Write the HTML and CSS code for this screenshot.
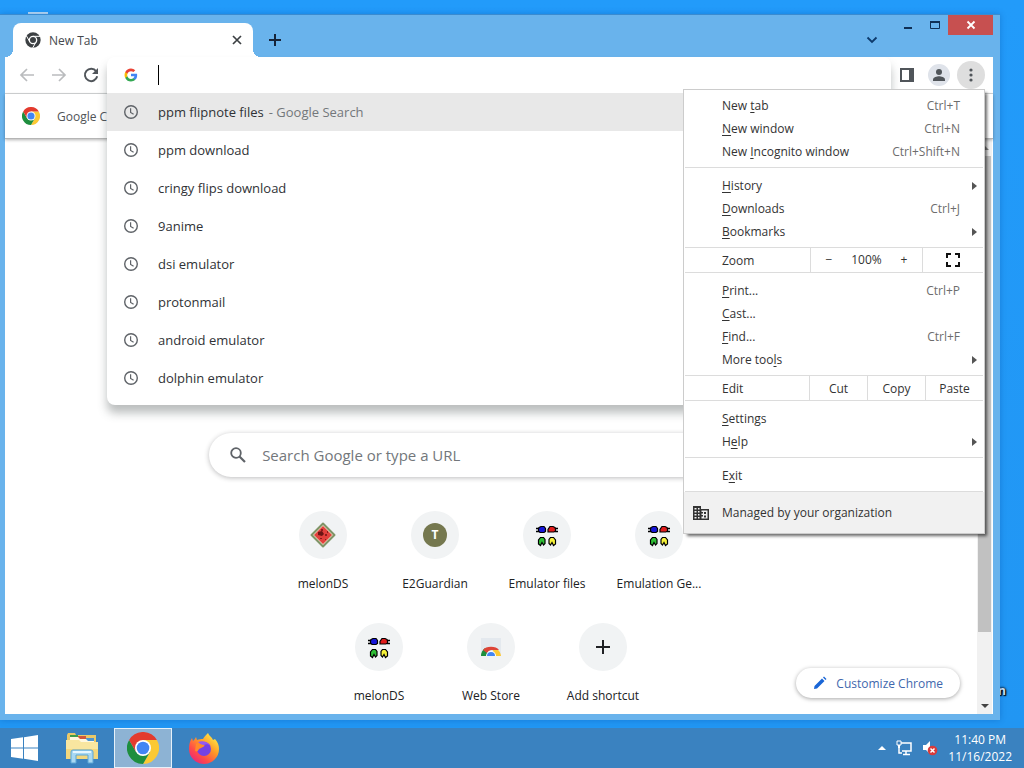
FILE: index.html
```
<!DOCTYPE html>
<html lang="en">
  <head>
    <title>New Tab</title>
    <meta charset="UTF-8">
    <link rel="stylesheet" href="styles.css">
  </head>

  <body>
	<!-- shared icons -->
	<svg class="defs" aria-hidden="true">
		<symbol id="clock" viewBox="0 0 16 16">
			<circle cx="8" cy="8" r="6.3" fill="none" stroke="#5f6368" stroke-width="1.4"/>
			<path d="M7.6 4.2v4.2l3 1.8" fill="none" stroke="#5f6368" stroke-width="1.2"/>
		</symbol>
		<symbol id="chrome" viewBox="0 0 48 48">
			<path d="M24 12H44.8A24 24 0 0 1 24 48L34.4 30z" fill="#fcc934"/>
			<path d="M34.4 30L24 48A24 24 0 0 1 3.2 12L13.6 30z" fill="#1e8e3e"/>
			<path d="M13.6 30L3.2 12A24 24 0 0 1 44.8 12H24z" fill="#e33b2e"/>
			<circle cx="24" cy="24" r="12" fill="#fff"/>
			<circle cx="24" cy="24" r="9.5" fill="#4285f4"/>
		</symbol>
		<symbol id="pads" viewBox="0 0 24 24">
			<path d="M1 5.500h3M1 8.500h3M20 5.500h3M20 8.500h3" stroke="#000" stroke-width="1.300"/>
			<path d="M4 4.500l2-1h3l1.500 2v3L9 9.500H5L3.500 8V6z" fill="#1515d8" stroke="#000" stroke-width="1.200"/>
			<path d="M20 4.500l-2-1h-3l-2 3V9h6l1.500-1V6z" fill="#e01c1c" stroke="#000" stroke-width="1.200"/>
			<path d="M5.500 14.500h3l1.500 2v4l-1.500 1.500L7 19.500 5.500 22.500 3.500 21v-4z" fill="#2fbf35" stroke="#000" stroke-width="1.200"/>
			<path d="M15.500 14.500h3l2 2.500v4l-2 1.500-1.500-3-1.500 2.500-1.500-1.500v-4z" fill="#f6f23a" stroke="#000" stroke-width="1.200"/>
		</symbol>
	</svg>

	<div class="desktop">
		<span class="icon-edge"></span>
		<span class="icon-label">n</span>

		<div class="window">
			<div class="titlebar">
				<div class="tab">
					<svg class="tab-icon" viewBox="0 0 48 48">
						<circle cx="24" cy="24" r="23" fill="#3c4043"/>
						<path d="M24 13H45M14.500 29.500L4 11.300M33.500 29.500L23 47.700" stroke="#fff" stroke-width="3"/>
						<circle cx="24" cy="24" r="11" fill="#3c4043" stroke="#fff" stroke-width="4"/>
					</svg>
					<span class="tab-title">New Tab</span>
					<button class="tab-close" aria-label="Close tab">
						<svg width="10" height="10" viewBox="0 0 10 10"><path d="M1 1l8 8M9 1L1 9" stroke="#3c4043" stroke-width="1.7"/></svg>
					</button>
				</div>
				<button class="new-tab" aria-label="New tab">
					<svg width="14" height="14" viewBox="0 0 14 14"><path d="M7 1v12M1 7h12" stroke="#16243a" stroke-width="2"/></svg>
				</button>
				<button class="tab-search" aria-label="Search tabs">
					<svg width="12" height="8" viewBox="0 0 12 8"><path d="M1.500 1.500L6 6l4.500-4.500" fill="none" stroke="#0d3a6b" stroke-width="1.8"/></svg>
				</button>
				<div class="caption">
					<button aria-label="Minimize"><svg width="10" height="10" viewBox="0 0 10 10"><path d="M1 8h8" stroke="#0f2f55" stroke-width="2"/></svg></button>
					<button aria-label="Maximize"><svg width="12" height="10" viewBox="0 0 12 10"><path d="M1.500 1.500h9v7h-9z" fill="none" stroke="#0f2f55"/><path d="M1 2h10" stroke="#0f2f55" stroke-width="2"/></svg></button>
					<button class="caption-close" aria-label="Close"><svg width="10" height="10" viewBox="0 0 10 10"><path d="M1.500 1.500l7 7M8.500 1.500l-7 7" stroke="#fff" stroke-width="1.800"/></svg></button>
				</div>
			</div>

			<div class="toolbar">
				<button class="tool" aria-label="Back">
					<svg width="16" height="16" viewBox="0 0 16 16"><path d="M15 8H2M8 2L2 8l6 6" fill="none" stroke="#babcbe" stroke-width="1.700"/></svg>
				</button>
				<button class="tool" aria-label="Forward">
					<svg width="16" height="16" viewBox="0 0 16 16"><path d="M1 8h13M8 2l6 6-6 6" fill="none" stroke="#babcbe" stroke-width="1.700"/></svg>
				</button>
				<button class="tool" aria-label="Reload">
					<svg width="16" height="16" viewBox="0 0 16 16"><path d="M13.200 4.300A6.200 6.200 0 1 0 14.200 9.300" fill="none" stroke="#50555a" stroke-width="2"/><path d="M15 1v6H9z" fill="#50555a"/></svg>
				</button>

				<div class="omnibox">
					<div class="popup">
						<div class="address">
							<svg class="row-icon" viewBox="0 0 48 48">
								<path d="M45.100 24.500c0-1.600-.1-3.100-.4-4.500H24v8.500h11.800a10 10 0 0 1-4.400 6.600v5.500h7.100c4.200-3.800 6.600-9.500 6.600-16.100z" fill="#4285f4"/>
								<path d="M24 46c5.900 0 10.900-2 14.600-5.300l-7.100-5.500c-2 1.300-4.500 2.100-7.500 2.100-5.700 0-10.600-3.900-12.300-9.100H4.300v5.700A22 22 0 0 0 24 46z" fill="#34a853"/>
								<path d="M11.700 28.200a13 13 0 0 1 0-8.400v-5.700H4.300a22 22 0 0 0 0 19.800z" fill="#fbbc04"/>
								<path d="M24 10.800c3.200 0 6.100 1.100 8.400 3.300l6.300-6.300A21.200 21.200 0 0 0 24 2 22 22 0 0 0 4.300 14.100l7.400 5.700c1.700-5.200 6.600-9 12.300-9z" fill="#ea4335"/>
							</svg>
							<span class="caret"></span>
							<input type="text" aria-label="Address and search bar">
						</div>
						<ul class="suggestions">
							<li class="selected"><svg class="row-icon"><use href="#clock"/></svg>ppm flipnote files<span class="hint">- Google Search</span></li>
							<li><svg class="row-icon"><use href="#clock"/></svg>ppm download</li>
							<li><svg class="row-icon"><use href="#clock"/></svg>cringy flips download</li>
							<li><svg class="row-icon"><use href="#clock"/></svg>9anime</li>
							<li><svg class="row-icon"><use href="#clock"/></svg>dsi emulator</li>
							<li><svg class="row-icon"><use href="#clock"/></svg>protonmail</li>
							<li><svg class="row-icon"><use href="#clock"/></svg>android emulator</li>
							<li><svg class="row-icon"><use href="#clock"/></svg>dolphin emulator</li>
						</ul>
					</div>
				</div>

				<button class="tool" aria-label="Side panel">
					<svg width="14" height="14" viewBox="0 0 14 14"><path d="M1 1h12v12H1z" fill="none" stroke="#50555a" stroke-width="2"/><path d="M9 1h4v12H9z" fill="#50555a"/></svg>
				</button>
				<button class="tool" aria-label="Profile">
					<svg width="22" height="22" viewBox="0 0 22 22"><circle cx="11" cy="11" r="11" fill="#dfe3ea"/><circle cx="11" cy="8" r="3" fill="#50555a"/><path d="M5 17v-1.500c0-2 4-3.200 6-3.200s6 1.200 6 3.200V17z" fill="#50555a"/></svg>
				</button>
				<div class="menu-anchor">
					<button class="tool tool-active" aria-label="Menu">
						<svg width="4" height="14" viewBox="0 0 4 14" fill="#50555a"><circle cx="2" cy="2" r="1.600"/><circle cx="2" cy="7" r="1.600"/><circle cx="2" cy="12" r="1.600"/></svg>
					</button>
					<div class="menu">
						<div class="group group-first">
							<button class="item"><span>New <u>t</u>ab</span><span class="key">Ctrl+T</span></button>
							<button class="item"><span><u>N</u>ew window</span><span class="key">Ctrl+N</span></button>
							<button class="item"><span>New <u>I</u>ncognito window</span><span class="key">Ctrl+Shift+N</span></button>
						</div>
						<div class="group">
							<button class="item more"><span><u>H</u>istory</span></button>
							<button class="item"><span><u>D</u>ownloads</span><span class="key">Ctrl+J</span></button>
							<button class="item more"><span><u>B</u>ookmarks</span></button>
						</div>
						<div class="split">
							<span class="split-label">Zoom</span>
							<div class="zoom">
								<button aria-label="Zoom out">−</button>
								<span>100%</span>
								<button aria-label="Zoom in">+</button>
							</div>
							<button class="full" aria-label="Full screen">
								<svg width="14" height="14" viewBox="0 0 14 14"><path d="M1 5V1h4M9 1h4v4M13 9v4H9M5 13H1V9" fill="none" stroke="#111" stroke-width="2"/></svg>
							</button>
						</div>
						<div class="group">
							<button class="item"><span><u>P</u>rint...</span><span class="key">Ctrl+P</span></button>
							<button class="item"><span><u>C</u>ast...</span></button>
							<button class="item"><span><u>F</u>ind...</span><span class="key">Ctrl+F</span></button>
							<button class="item more"><span>More too<u>l</u>s</span></button>
						</div>
						<div class="split">
							<span class="split-label">Edit</span>
							<button class="edit">Cut</button>
							<button class="edit">Copy</button>
							<button class="edit">Paste</button>
						</div>
						<div class="group">
							<button class="item"><span><u>S</u>ettings</span></button>
							<button class="item more"><span>H<u>e</u>lp</span></button>
						</div>
						<div class="group">
							<button class="item"><span>E<u>x</u>it</span></button>
						</div>
						<button class="managed">
							<svg width="16" height="14" viewBox="0 0 16 14"><path d="M0 0h8v3h8v11H0z" fill="#333"/><path d="M1.500 2h2v1.500h-2zM5 2h1.500v1.500H5zM1.500 5h2v1.500h-2zM5 5h1.500v1.500H5zM1.500 8h2v1.500h-2zM5 8h1.500v1.500H5zM1.500 11h2v1.500h-2zM5 11h1.500v1.500H5zM8.500 4.500h6v8h-6z" fill="#f2f2f2"/><path d="M8 6h2v1.500H8zM11 6h2v2h-2zM8 9h2v1.500H8zM11 9.500h2v2h-2z" fill="#333"/></svg>
							Managed by your organization
						</button>
					</div>
				</div>
			</div>

			<div class="bookmarks">
				<svg width="18" height="18"><use href="#chrome"/></svg>
				<a href="#">Google Chrome</a>
			</div>

			<div class="content">
				<div class="page">
					<label class="search">
						<svg width="18" height="18" viewBox="0 0 18 18"><circle cx="7" cy="7" r="4.800" fill="none" stroke="#5f6368" stroke-width="1.800"/><path d="M10.500 10.500L16 16" stroke="#5f6368" stroke-width="2.200"/></svg>
						<input type="text" placeholder="Search Google or type a URL" aria-label="Search">
					</label>
					<div class="shortcuts">
						<a href="#" class="shortcut">
							<span class="disc"><svg width="26" height="26" viewBox="0 0 26 26"><path d="M13 1.500L24.500 13 13 24.500 1.500 13z" fill="#7f9467" stroke="#7f9467" stroke-width="2" stroke-linejoin="round"/><path d="M13 3L23 13 13 23 3 13z" fill="#f0d8c0"/><path d="M13 4L22 13l-9 9-9-9z" fill="#e2403c"/><path d="M8 10l4-1 2 3-2 2-4-1z" fill="#6b1414"/><path d="M11 7h2v2h-2zM15 12h2v2h-2zM17 9h1v2h-1zM10 16h2v1h-2zM15 17h1v1h-1z" fill="#8c1d1d"/></svg></span>
							<span class="name">melonDS</span>
						</a>
						<a href="#" class="shortcut">
							<span class="disc"><span class="letter">T</span></span>
							<span class="name">E2Guardian</span>
						</a>
						<a href="#" class="shortcut">
							<span class="disc"><svg width="24" height="24"><use href="#pads"/></svg></span>
							<span class="name">Emulator files</span>
						</a>
						<a href="#" class="shortcut">
							<span class="disc"><svg width="24" height="24"><use href="#pads"/></svg></span>
							<span class="name">Emulation Ge...</span>
						</a>
						<a href="#" class="shortcut">
							<span class="disc"><svg width="24" height="24"><use href="#pads"/></svg></span>
							<span class="name">melonDS</span>
						</a>
						<a href="#" class="shortcut">
							<span class="disc"><svg width="22" height="20" viewBox="0 0 22 20"><path d="M1 1h20v18H1z" fill="#e4e9ee"/><path d="M1 19a10 10 0 0 1 4-8l4 8z" fill="#1e8e3e"/><path d="M21 19a10 10 0 0 0-4-7h-5l4 7z" fill="#fcc934"/><path d="M3 13a9 6 0 0 1 16 0h-8a6 6 0 0 0-4 3z" fill="#dd4437"/><path d="M6 19a5 5 0 0 1 10 0z" fill="#fff"/><path d="M7 19a4 4 0 0 1 8 0z" fill="#4285f4"/></svg></span>
							<span class="name">Web Store</span>
						</a>
						<button class="shortcut">
							<span class="disc"><svg width="14" height="14" viewBox="0 0 14 14"><path d="M7 0v14M0 7h14" stroke="#202124" stroke-width="2"/></svg></span>
							<span class="name">Add shortcut</span>
						</button>
					</div>
					<button class="customize">
						<svg width="14" height="14" viewBox="0 0 14 14"><path d="M1 13l.5-3L9 2.500 11.500 5 4 12.500zM10 1.500l1-1L13.500 3l-1 1z" fill="#1a66d6"/></svg>
						Customize Chrome
					</button>
				</div>
				<div class="scrollbar">
					<span class="arrow arrow-up"></span>
					<span class="thumb"></span>
					<span class="track"></span>
					<span class="arrow arrow-down"></span>
				</div>
			</div>
		</div>
	</div>

	<div class="taskbar">
		<button class="task" aria-label="Start">
			<svg width="28" height="26" viewBox="0 0 28 26" fill="#fff"><path d="M0 4l12-1.700V12.500H0zM13 2.200L27 0v12.500H13zM0 13.500h12v10.200L0 22zM13 13.500h14V26l-14-2.200z"/></svg>
		</button>
		<button class="task" aria-label="File Explorer">
			<svg width="34" height="32" viewBox="0 0 34 32">
				<path d="M2 3l1-2h7l1 2h20v24H2z" fill="#e9c869"/>
				<path d="M5 3h8v3H5z" fill="#3f9c4a"/><path d="M13 4h8v3h-8z" fill="#d0583c"/><path d="M21 6h8v3h-8z" fill="#4f95cf"/>
				<path d="M5 5h8l2 2h6l2 2h6v4H5z" fill="#fff8df"/>
				<path d="M1 8h13l2 2h17v17H1z" fill="#f8e6a0"/>
				<path d="M1 17h32v10H1z" fill="#f2d77e"/>
				<path d="M6 31V20q0-2 2-2h18q2 0 2 2v11h-5v-8H11v8z" fill="#a8d8f2" stroke="#5ba6d6"/>
				<path d="M8 20h18" stroke="#e5f6ff" stroke-width="2"/>
			</svg>
		</button>
		<button class="task task-open" aria-label="Google Chrome">
			<svg width="32" height="32"><use href="#chrome"/></svg>
		</button>
		<button class="task" aria-label="Firefox">
			<svg width="32" height="32" viewBox="0 0 32 32">
				<defs>
					<linearGradient id="fox" x1="1" y1="0" x2="0.200" y2="1">
						<stop offset="0.100" stop-color="#fff04a"/><stop offset="0.450" stop-color="#ff9a26"/><stop offset="0.750" stop-color="#ff4a4a"/><stop offset="1" stop-color="#e5257e"/>
					</linearGradient>
				</defs>
				<path d="M20 1c1 3 4 4 5 7l2-1c3 3 4 7 4 10a15 15 0 0 1-30 0c0-5 1-8 3-11l1 3c1-1 2-2 3-4l1 3c2-1 4-1 6-1 1-2 3-4 5-6z" fill="url(#fox)"/>
				<circle cx="16" cy="17" r="7" fill="#7542e5"/>
				<path d="M8 12c3-2 5 0 7 0 2 1 2 2 0 3l-4 2c-1 2-2 3-4 2z" fill="#ff8a2a"/>
				<path d="M10 10c5-2 10 0 13 4-3-2-5-2-7-1-2 0-4-1-6-3z" fill="#9659f0"/>
			</svg>
		</button>
		<div class="tray">
			<svg width="8" height="4" viewBox="0 0 8 4"><path d="M4 0l4 4H0z" fill="#fff"/></svg>
			<svg width="16" height="16" viewBox="0 0 16 16"><path d="M5 3h10v8H6M10 11v3M7 14.500h7M3 7v6h3" fill="none" stroke="#fff" stroke-width="1.500"/><path d="M1 1h4v4H1z" fill="#3a7dbb" stroke="#fff"/><path d="M3 5v3" stroke="#fff" stroke-width="2"/></svg>
			<svg width="16" height="16" viewBox="0 0 16 16"><path d="M1 5h3l4-4v13l-4-4H1z" fill="#fff"/><circle cx="10.500" cy="10.500" r="4.800" fill="#d93a3a"/><path d="M8.500 8.500l4 4M12.500 8.500l-4 4" stroke="#fff" stroke-width="1.500"/></svg>
			<time class="clock">11:40 PM<br>11/16/2022</time>
		</div>
	</div>
  </body>
</html>
```
FILE: styles.css
```
* {box-sizing: border-box;}
body {
	margin: 0;
	height: 100vh;
	display: flex;
	flex-direction: column;
	overflow: hidden;
	font-family: "Open Sans", "Noto Sans", sans-serif;
	font-size: 12px;
	color: #333;
}
button, input {
	font: inherit;
	color: inherit;
	border: none;
	background: none;
	padding: 0;
	margin: 0;
	outline: none;
}
a {
	color: inherit;
	text-decoration: none;
}
svg {flex: none;}
.defs {
	position: absolute;
	width: 0;
	height: 0;
}

/* Desktop */
.desktop {
	position: relative;
	flex: 1;
	min-height: 0;
	display: flex;
	padding: 14px 24px 8px 0;
	background: linear-gradient(#229bfa, #2196f3);
}
.icon-edge {
	position: absolute;
	left: 28px;
	top: 12px;
	width: 20px;
	height: 2px;
	background: #b9dcf8;
}
.icon-label {
	position: absolute;
	right: 18px;
	top: 682px;
	color: #cfe6fa;
	font-weight: bold;
	text-shadow: 1px 1px 1px #000, 0 0 2px #000, 0 0 3px #000;
}

/* Window */
.window {
	position: relative;
	flex: 1;
	display: flex;
	flex-direction: column;
	padding: 0 7px 6px 5px;
	border-top: 1px solid #3a8bd0;
	background: #69b3ec;
	box-shadow: 0 0 6px rgba(0, 60, 140, 0.3);
}
.titlebar {
	display: flex;
	height: 42px;
}
.tab {
	position: relative;
	display: flex;
	align-items: center;
	width: 240px;
	margin: 8px 0 0 8px;
	padding: 0 10px 0 12px;
	border-radius: 8px 8px 0 0;
	background: #fff;
	color: #45494d;
}
/* curved feet of the active tab */
.tab::before, .tab::after {
	content: "";
	position: absolute;
	bottom: 0;
	width: 8px;
	height: 8px;
}
.tab::before {
	right: 100%;
	background: radial-gradient(circle at 0 0, transparent 8px, #fff 8px);
}
.tab::after {
	left: 100%;
	background: radial-gradient(circle at 100% 0, transparent 8px, #fff 8px);
}
.tab-icon {
	width: 16px;
	height: 16px;
}
.tab-title {
	flex: 1;
	margin-left: 8px;
}
.tab-close {
	width: 12px;
	height: 20px;
	display: flex;
	align-items: center;
	justify-content: center;
}
.new-tab {
	margin: 8px 0 0 15px;
	display: flex;
	align-items: center;
}
.tab-search {
	margin: 8px 16px 0 auto;
	display: flex;
	align-items: center;
}
.caption {
	display: flex;
	height: 20px;
}
.caption button {
	width: 27px;
	display: flex;
	align-items: center;
	justify-content: center;
}
.caption .caption-close {
	width: 45px;
	background: #c75050;
}

/* Toolbar */
.toolbar {
	display: flex;
	align-items: center;
	gap: 4px;
	height: 37px;
	padding: 0 8px;
	border-bottom: 1px solid #d5d7d9;
	background: #fff;
}
.tool {
	width: 28px;
	height: 28px;
	display: flex;
	align-items: center;
	justify-content: center;
	border-radius: 50%;
}
.tool-active {background: #dedede;}
.omnibox {
	position: relative;
	flex: 1;
	align-self: stretch;
	margin: 0 -2px;
}
.popup {
	position: absolute;
	top: 0;
	left: 0;
	right: 0;
	z-index: 1;
	padding-bottom: 8px;
	border-radius: 8px;
	background: #fff;
	box-shadow: 0 8px 10px rgba(60, 70, 70, 0.35);
}
.address {
	display: flex;
	align-items: center;
	height: 36px;
	padding-left: 16px;
}
.row-icon {
	width: 16px;
	height: 16px;
	margin-right: 19px;
}
.address .row-icon {
	width: 14px;
	height: 14px;
	margin-left: 1px;
	margin-right: 20px;
}
.caret {
	width: 1px;
	height: 20px;
	background: #000;
}
.address input {flex: 1;}
.suggestions {
	list-style: none;
	margin: 0;
	padding: 0;
}
.suggestions li {
	display: flex;
	align-items: center;
	height: 38px;
	padding-left: 16px;
	font-size: 13px;
	color: #303236;
}
.suggestions .selected {background: #e8e8e8;}
.hint {
	margin-left: 5px;
	color: #73777b;
}

/* Menu */
.menu-anchor {position: relative;}
.menu {
	position: absolute;
	top: 28px;
	right: 0;
	z-index: 2;
	width: 302px;
	border: 1px solid #ccc;
	background: #fff;
	box-shadow: 3px 3px 3px -1px rgba(0, 0, 0, 0.6);
}
.group {
	margin: 0 1px;
	padding: 6px 0 4px;
	border-bottom: 1px solid #dcdcdc;
}
.group-first {padding: 4px 0;}
.item {
	display: flex;
	align-items: center;
	justify-content: space-between;
	width: 100%;
	height: 23px;
	padding: 0 23px 0 37px;
}
.item u {text-underline-offset: 2px;}
.key {color: #6d6d6d;}
.more {padding-right: 6px;}
.more::after {
	content: "";
	border: 4px solid transparent;
	border-left: 5px solid #555;
	border-right: 0;
}
.split {
	display: flex;
	margin: 0 1px;
	height: 25px;
	border-bottom: 1px solid #dcdcdc;
}
.split-label {
	flex: 1;
	padding-left: 37px;
	line-height: 25px;
}
.zoom {
	display: flex;
	width: 112px;
	border-left: 1px solid #dcdcdc;
	text-align: center;
	line-height: 24px;
}
.zoom button {width: 36px;}
.zoom span {flex: 1;}
.full {
	width: 61px;
	display: flex;
	align-items: center;
	justify-content: center;
	border-left: 1px solid #dcdcdc;
}
.edit {
	width: 58px;
	border-left: 1px solid #dcdcdc;
}
.managed {
	display: flex;
	align-items: center;
	gap: 13px;
	width: 100%;
	height: 41px;
	padding-left: 9px;
	background: #f1f1f1;
}

/* Bookmarks */
.bookmarks {
	display: flex;
	align-items: center;
	gap: 17px;
	height: 45px;
	padding-left: 17px;
	border-bottom: 1px solid #b5b5b5;
	background: #fff;
	color: #505458;
	box-shadow: 0 1px 3px rgba(0, 0, 0, 0.3);
	z-index: 0;
}

/* New tab page */
.content {
	flex: 1;
	min-height: 0;
	display: flex;
	background: #fff;
}
.page {
	position: relative;
	flex: 1;
	padding-top: 294px;
}
.search {
	display: flex;
	align-items: center;
	width: 58%;
	height: 44px;
	margin: 0 auto;
	padding: 0 20px;
	border-radius: 22px;
	background: #fff;
	box-shadow: 0 1px 5px rgba(32, 33, 36, 0.3);
}
.search input {
	flex: 1;
	margin-left: 15px;
	font-size: 15px;
}
.search input::placeholder {
	color: #73777b;
	opacity: 1;
}
.shortcuts {
	display: flex;
	flex-wrap: wrap;
	justify-content: center;
	width: 448px;
	margin: 22px auto 0;
}
.shortcut {
	display: flex;
	flex-direction: column;
	align-items: center;
	width: 112px;
	height: 112px;
	padding-top: 12px;
	color: #202124;
}
.disc {
	width: 48px;
	height: 48px;
	display: flex;
	align-items: center;
	justify-content: center;
	border-radius: 50%;
	background: #f1f3f4;
}
.letter {
	width: 24px;
	border-radius: 50%;
	background: #75784f;
	color: #fff;
	font-weight: bold;
	line-height: 24px;
	text-align: center;
}
.name {
	margin-top: 16px;
	white-space: nowrap;
}
.customize {
	position: absolute;
	right: 17px;
	bottom: 16px;
	display: flex;
	align-items: center;
	gap: 9px;
	height: 30px;
	padding: 0 17px;
	border-radius: 15px;
	background: #fff;
	color: #3f68ad;
	box-shadow: 0 1px 4px rgba(0, 0, 0, 0.35);
}

.scrollbar {
	display: flex;
	flex-direction: column;
	align-items: center;
	width: 16px;
	border-right: 1px solid #fff;
	background: #f1f1f1;
}
.arrow {
	height: 17px;
	display: flex;
	align-items: center;
}
.arrow::after {
	content: "";
	border: 4px solid transparent;
}
.arrow-up::after {
	border-top: 0;
	border-bottom-color: #888;
}
.arrow-down::after {
	border-bottom: 0;
	border-top-color: #444;
}
.thumb {
	flex: 88;
	width: 13px;
	background: #c1c1c1;
}
.track {flex: 12;}

/* Taskbar */
.taskbar {
	display: flex;
	height: 40px;
	background: #3a82c0;
	color: #fff;
}
.task {
	width: 58px;
	margin-right: 3px;
	display: flex;
	align-items: center;
	justify-content: center;
}
.task:first-child {
	width: 50px;
}
.task-open {
	border: 1px solid #e5f1fa;
	background: #8db3d4;
}
.tray {
	display: flex;
	align-items: center;
	gap: 10px;
	margin-left: auto;
	padding-right: 12px;
}
.tray .clock {
	line-height: 17px;
	text-align: center;
}
```
